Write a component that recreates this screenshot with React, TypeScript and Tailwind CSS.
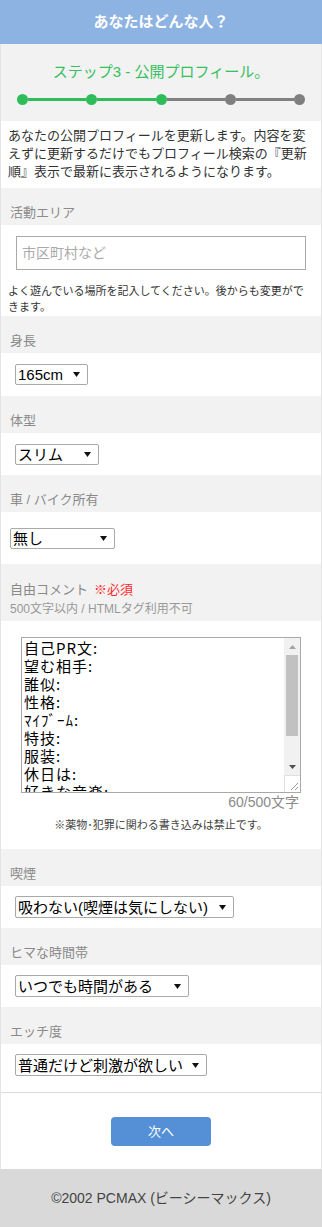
import React from "react";

///////// Profile step 3 — public profile form (mobile) /////////

const steps = [true, true, true, false, false];

function SectionLabel({ children }: { children: React.ReactNode }) {
  return (
    <div className="bg-[#f2f2f2] pl-[9px] pt-4 pb-[3px] text-[13px] leading-[18px] text-[#8a8a8a]">
      {children}
    </div>
  );
}

function FakeSelect({ value, width, tall }: { value: string; width: string; tall?: boolean }) {
  return (
    <div
      className={`flex ${tall ? "h-[22px]" : "h-[21px]"} items-center justify-between rounded-[2px] border border-[#a9a9a9] bg-white pl-[2px] pr-[7px] text-[15px] leading-none text-black ${width}`}
    >
      <span>{value}</span>
      <svg width="7" height="5" viewBox="0 0 7 5" className="shrink-0">
        <path d="M0 0h7L3.5 5z" fill="#111" />
      </svg>
    </div>
  );
}

const commentText =
  "自己PR文:\n望む相手:\n誰似:\n性格:\nﾏｲﾌﾞｰﾑ:\n特技:\n服装:\n休日は:\n好きな音楽:\n好きな映画:\n好きな食べ物:\n一言:";

export default function App() {
  return (
    <div className="w-[322px] bg-white font-['Liberation_Sans','Noto_Sans_CJK_JP',sans-serif]">
      {/* header */}
      <div className="flex h-[44px] items-center justify-center bg-[#8db3e2] text-[15px] font-semibold text-white">
        あなたはどんな人？
      </div>

      <div className="border-x border-[#e4e4e4]">
        {/* step indicator */}
        <div className="bg-[#f2f2f2] pt-[18px] pb-[16px]">
          <div className="text-center text-[15px] leading-[20px] text-[#37c060]">
            ステップ3 - 公開プロフィール。
          </div>
          <div className="mt-[12px] flex items-center px-[16px]">
            {steps.map((done, i) => (
              <React.Fragment key={i}>
                {i > 0 && (
                  <div className={`h-[3px] flex-1 ${steps[i] ? "bg-[#2fbd5a]" : "bg-[#808080]"}`} />
                )}
                <div
                  className={`h-[11px] w-[11px] rounded-full ${done ? "bg-[#2fbd5a]" : "bg-[#7f7f7f]"}`}
                />
              </React.Fragment>
            ))}
          </div>
        </div>

        {/* intro */}
        <p className="px-[7px] pt-[6px] pb-[7px] text-[13px] leading-[18px] text-[#333]">
          あなたの公開プロフィールを更新します。内容を変えずに更新するだけでもプロフィール検索の『更新順』表示で最新に表示されるようになります。
        </p>

        <SectionLabel>活動エリア</SectionLabel>
        <div className="pt-[11px] pb-[1px]">
          <div className="mx-[15px] flex h-[34px] items-center border border-[#aaa] pl-[5px] text-[14px] text-[#aaa]">
            市区町村など
          </div>
          <p className="mt-[13px] px-[7px] text-[11px] leading-[16px] text-[#333]">
            よく遊んでいる場所を記入してください。後からも変更ができます。
          </p>
        </div>

        <SectionLabel>身長</SectionLabel>
        <div className="px-[14px] pt-[11px] pb-[11px]">
          <FakeSelect value="165cm" width="w-[73px]" />
        </div>

        <SectionLabel>体型</SectionLabel>
        <div className="px-[14px] pt-[11px] pb-[10px]">
          <FakeSelect value="スリム" width="w-[84px]" />
        </div>

        <SectionLabel>車 / バイク所有</SectionLabel>
        <div className="px-[9px] pt-[16px] pb-[15px]">
          <FakeSelect value="無し" width="w-[105px]" />
        </div>

        {/* free comment */}
        <div className="bg-[#f2f2f2] pl-[9px] pt-[17px] pb-[4px]">
          <div className="flex text-[13px] leading-[18px] text-[#8a8a8a]">
            <span>自由コメント</span>
            <span className="ml-[6px] text-[#ff2b2b]">※必須</span>
          </div>
          <div className="mt-[2px] text-[12px] leading-[16px] text-[#999]">
            500文字以内 / HTMLタグ利用不可
          </div>
        </div>
        <div className="pt-[16px] pb-[16px]">
          <div className="mx-[20px] flex h-[156px] w-[280px] border border-[#a9a9a9]">
            <textarea
              readOnly
              defaultValue={commentText}
              className="min-w-0 flex-1 resize-none overflow-hidden px-[2px] py-[1px] font-['Noto_Sans_CJK_JP',sans-serif] text-[15px] leading-[18px] tracking-[1px] text-black outline-none"
            />
            {/* scrollbar */}
            <div className="flex w-[16px] flex-col bg-[#f1f1f1]">
              <div className="flex h-[17px] items-center justify-center">
                <svg width="7" height="4" viewBox="0 0 7 4">
                  <path d="M0 4h7L3.5 0z" fill="#a3a3a3" />
                </svg>
              </div>
              <div className="mx-[2px] h-[81px] bg-[#c1c1c1]" />
              <div className="flex-1" />
              <div className="flex h-[17px] items-center justify-center">
                <svg width="7" height="4" viewBox="0 0 7 4">
                  <path d="M0 0h7L3.5 4z" fill="#505050" />
                </svg>
              </div>
              <div className="flex h-[17px] items-end justify-end border-t border-l border-[#e0e0e0] bg-white p-[2px]">
                <svg width="8" height="8" viewBox="0 0 8 8">
                  <path d="M8 1L1 8M8 5L5 8" stroke="#999" strokeWidth="1" />
                </svg>
              </div>
            </div>
          </div>
          <div className="pr-[22px] text-right text-[14px] leading-[18px] text-[#8a8a8a]">60/500文字</div>
          <div className="mt-[6px] text-center text-[11px] leading-[16px] text-[#444]">
            ※薬物･犯罪に関わる書き込みは禁止です。
          </div>
        </div>

        <SectionLabel>喫煙</SectionLabel>
        <div className="px-[14px] pt-[10px] pb-[10px]">
          <FakeSelect value="吸わない(喫煙は気にしない)" width="w-[219px]" tall />
        </div>

        <SectionLabel>ヒマな時間帯</SectionLabel>
        <div className="px-[14px] pt-[10px] pb-[10px]">
          <FakeSelect value="いつでも時間がある" width="w-[174px]" tall />
        </div>

        <SectionLabel>エッチ度</SectionLabel>
        <div className="border-b border-[#dcdcdc] px-[14px] pt-[10px] pb-[16px]">
          <FakeSelect value="普通だけど刺激が欲しい" width="w-[192px]" tall />
        </div>

        {/* submit */}
        <div className="flex justify-center pt-[24px] pb-[23px]">
          <button className="h-[29px] w-[100px] rounded-[4px] bg-[#558fd6] text-[13px] text-white">
            次へ
          </button>
        </div>
      </div>

      {/* footer */}
      <div className="flex h-[58px] items-center justify-center bg-[#d9d9d9] text-[14px] text-[#444]">
        ©2002 PCMAX (ビーシーマックス)
      </div>
    </div>
  );
}
